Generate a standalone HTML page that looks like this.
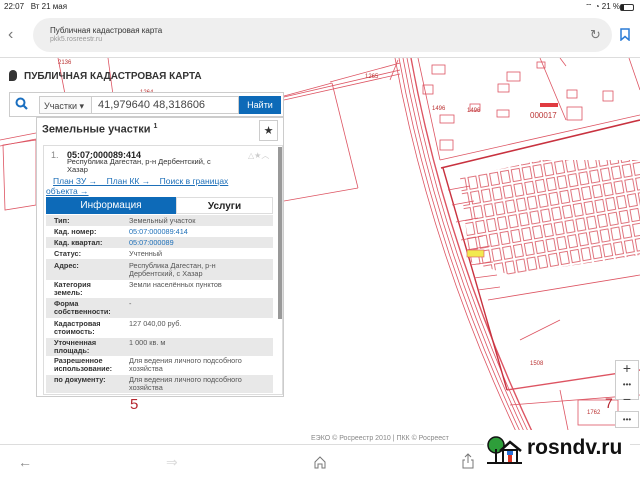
<!DOCTYPE html>
<html><head><meta charset="utf-8"><style>
*{margin:0;padding:0;box-sizing:border-box}
body{width:640px;height:480px;overflow:hidden;background:#fff;font-family:"Liberation Sans","DejaVu Sans",sans-serif;position:relative;color:#222}
.a{position:absolute;white-space:nowrap}
.row{position:absolute;left:46px;width:227px;font-size:7.3px;line-height:8px}
.row .l{position:absolute;left:8px;font-weight:bold;color:#333}
.row .v{position:absolute;left:83px;color:#555}
.g{background:#e8e8e8}
</style></head><body>
<!-- map -->
<svg class="a" style="left:0;top:56px" width="640" height="390" viewBox="0 56 640 390">
<defs>
<pattern id="p" width="11" height="15" patternUnits="userSpaceOnUse" patternTransform="rotate(-10)">
<rect x="1" y="1" width="8" height="12" fill="none" stroke="#d9535f" stroke-width="0.8"/>
</pattern>
<clipPath id="c"><polygon points="460,178 640,138 640,255 510,275 470,262"/></clipPath>
</defs>
<g fill="none" stroke="#dd5462" stroke-width="0.8">
<line x1="58" y1="58" x2="70" y2="120"/>
<line x1="108" y1="58" x2="113" y2="95"/>
<line x1="0" y1="140" x2="36" y2="133"/>
<line x1="0" y1="146" x2="36" y2="139"/>
<line x1="284" y1="97" x2="400" y2="70"/>
<line x1="284" y1="100" x2="400" y2="74"/>
<line x1="284" y1="96" x2="332" y2="83"/>
<line x1="332" y1="83" x2="358" y2="188"/>
<line x1="358" y1="188" x2="284" y2="201"/>
<polygon points="3,145 36,140 36,205 5,210"/>
<polyline points="330,82 400,63"/>
<line x1="390" y1="80" x2="398" y2="60"/>
<path d="M395 58 Q430 250 520 440"/>
<path d="M399 58 Q434 250 524 440"/>
<path d="M403 58 Q438 250 528 440"/>
<path d="M407 58 Q442 250 532 440"/>
<path d="M411 58 Q446 250 536 440" stroke-width="1.4"/>
<line x1="418" y1="58" x2="440" y2="160"/>
<line x1="440" y1="160" x2="640" y2="115"/>
<line x1="540" y1="58" x2="566" y2="120"/>
<line x1="560" y1="58" x2="566" y2="66"/>
<line x1="629" y1="58" x2="640" y2="90"/>
<line x1="507" y1="390" x2="640" y2="370" stroke-width="1.4"/>
<line x1="520" y1="340" x2="560" y2="320"/>
<line x1="510" y1="405" x2="640" y2="395"/>
<line x1="560" y1="390" x2="570" y2="440"/>
<rect x="537" y="62" width="8" height="6"/><rect x="432" y="65" width="13" height="9"/><rect x="507" y="72" width="13" height="9"/>
<rect x="423" y="85" width="10" height="9"/><rect x="498" y="84" width="11" height="8"/><rect x="567" y="90" width="10" height="8"/><rect x="603" y="91" width="10" height="10"/>
<rect x="497" y="110" width="12" height="7"/><rect x="567" y="107" width="15" height="13"/><rect x="470" y="104" width="10" height="7"/>
<rect x="440" y="115" width="14" height="8"/><rect x="440" y="140" width="13" height="10"/>
<rect x="578" y="400" width="40" height="25"/>
</g>
<polyline points="441,168 640,120" fill="none" stroke="#c8323f" stroke-width="1.6"/>
<polyline points="443,168 507,390" fill="none" stroke="#c8323f" stroke-width="1.4"/>
<rect x="460" y="160" width="180" height="120" fill="url(#p)" clip-path="url(#c)"/>
<g fill="none" stroke="#dd5462" stroke-width="0.8">
<line x1="448" y1="190" x2="470" y2="186"/><line x1="452" y1="205" x2="474" y2="201"/>
<line x1="456" y1="222" x2="478" y2="218"/><line x1="461" y1="240" x2="483" y2="236"/>
<line x1="466" y1="250" x2="490" y2="246"/><line x1="470" y1="265" x2="493" y2="262"/>
<line x1="474" y1="278" x2="497" y2="275"/><line x1="478" y1="290" x2="500" y2="287"/>
<line x1="488" y1="300" x2="640" y2="275"/>
</g>
<rect x="467" y="250" width="17" height="7" fill="#f2ea50" stroke="#d9535f" stroke-width="0.6"/>
<rect x="540" y="103" width="18" height="4" fill="#e03a40"/>
<g font-size="6" fill="#b33" font-family="Liberation Sans">
<text x="58" y="64">2136</text><text x="140" y="94">1264</text><text x="365" y="78">1265</text>
<text x="432" y="110">1496</text><text x="467" y="112">1496</text>
<text x="530" y="118" font-size="8">000017</text><text x="530" y="365">1508</text><text x="587" y="414">1762</text>
</g>
<text x="130" y="409" font-size="15" fill="#b5262f" font-family="Liberation Sans">5</text>
<text x="605" y="408" font-size="14" fill="#b5262f" font-family="Liberation Sans">7</text>
</svg>

<!-- status bar -->
<div class="a" style="left:4px;top:2px;font-size:8px">22:07 &nbsp; Вт 21 мая</div>
<div class="a" style="left:585px;top:2px;font-size:8px">⌔ ◔ 21 %</div>
<div class="a" style="left:620px;top:4px;width:14px;height:7px;border:1px solid #333;border-radius:2px"><div style="width:3px;height:5px;background:#222"></div></div>
<!-- url bar -->
<div class="a" style="left:8px;top:26px;font-size:16px;color:#777">‹</div>
<div class="a" style="left:33px;top:18px;width:579px;height:34px;background:#efefef;border-radius:17px"></div>
<div class="a" style="left:50px;top:26px;font-size:8px;color:#333">Публичная кадастровая карта</div>
<div class="a" style="left:50px;top:36px;font-size:7px;color:#999">pkk5.rosreestr.ru</div>
<div class="a" style="left:590px;top:27px;font-size:13px;color:#777">↻</div>
<svg class="a" style="left:620px;top:28px" width="10" height="13"><path d="M1 1H9V12L5 8.5L1 12Z" fill="none" stroke="#2a7bd6" stroke-width="1.5"/></svg>
<div class="a" style="left:0;top:57px;width:640px;height:1px;background:#ddd"></div>

<!-- header -->
<div class="a" style="left:9px;top:70px;width:8px;height:11px;background:#333;border-radius:4px 4px 4px 0"></div>
<div class="a" style="left:24px;top:71px;font-size:10px;font-weight:bold;color:#333">ПУБЛИЧНАЯ КАДАСТРОВАЯ КАРТА</div>
<!-- search -->
<div class="a" style="left:9px;top:92px;width:275px;height:25px;background:#fff;border:1px solid #ccc"></div>
<svg class="a" style="left:15px;top:97px" width="14" height="14"><circle cx="5.5" cy="5.5" r="4" fill="none" stroke="#1a6fc0" stroke-width="2"/><line x1="8.5" y1="8.5" x2="12" y2="12" stroke="#1a6fc0" stroke-width="2.2"/></svg>
<div class="a" style="left:39px;top:96px;width:53px;height:18px;border:1px solid #ccc;background:#fafafa;font-size:9px;color:#444;padding:4px 0 0 4px">Участки ▾</div>
<div class="a" style="left:91px;top:96px;width:148px;height:18px;border:1px solid #ccc;font-size:11px;color:#444;padding:2px 0 0 6px">41,979640 48,318606</div>
<div class="a" style="left:239px;top:96px;width:42px;height:18px;background:#0d6ab8;color:#fff;font-size:9px;text-align:center;padding-top:4px">Найти</div>
<!-- panel -->
<div class="a" style="left:36px;top:117px;width:248px;height:280px;background:#fff;border:1px solid #ccc"></div>
<div class="a" style="left:42px;top:123px;font-size:11px;font-weight:bold;color:#333">Земельные участки <sup style="font-size:7px">1</sup></div>
<div class="a" style="left:259px;top:120px;width:19px;height:21px;border:1px solid #ccc;text-align:center;font-size:11px;padding-top:3px;color:#333">★</div>
<div class="a" style="left:43px;top:145px;width:240px;height:250px;border:1px solid #ddd"></div>
<div class="a" style="left:278px;top:147px;width:4px;height:172px;background:#999"></div>
<div class="a" style="left:51px;top:150px;font-size:9px;color:#888">1.</div>
<div class="a" style="left:67px;top:150px;font-size:9px;font-weight:bold">05:07:000089:414</div>
<div class="a" style="left:248px;top:150px;font-size:8px;color:#ccc">△★︿</div>
<div class="a" style="left:67px;top:158px;font-size:7.5px;color:#333;line-height:8px">Республика Дагестан, р-н Дербентский, с<br>Хазар</div>
<div class="a" style="left:53px;top:177px;font-size:8.5px;color:#1d6fb8;text-decoration:underline;line-height:9px">План ЗУ → &nbsp;&nbsp; План КК → &nbsp;&nbsp; Поиск в границах</div>
<div class="a" style="left:46px;top:186px;font-size:8.5px;color:#1d6fb8;text-decoration:underline">объекта →</div>
<div class="a" style="left:46px;top:197px;width:130px;height:17px;background:#0d6ab8;color:#fff;font-size:10px;text-align:center;padding-top:3px">Информация</div>
<div class="a" style="left:176px;top:197px;width:97px;height:17px;background:#fff;border:1px solid #ddd;color:#222;font-size:10px;text-align:center;padding-top:3px;font-weight:bold">Услуги</div>

<div class="row g" style="top:215px;height:11px"><span class="l" style="top:2px">Тип:</span><span class="v" style="top:2px">Земельный участок</span></div>
<div class="row" style="top:226px;height:11px"><span class="l" style="top:2px">Кад. номер:</span><span class="v" style="top:2px;color:#1d6fb8">05:07:000089:414</span></div>
<div class="row g" style="top:237px;height:11px"><span class="l" style="top:2px">Кад. квартал:</span><span class="v" style="top:2px;color:#1d6fb8">05:07:000089</span></div>
<div class="row" style="top:248px;height:11px"><span class="l" style="top:2px">Статус:</span><span class="v" style="top:2px">Учтенный</span></div>
<div class="row g" style="top:259px;height:21px"><span class="l" style="top:3px">Адрес:</span><span class="v" style="top:3px">Республика Дагестан, р-н<br>Дербентский, с Хазар</span></div>
<div class="row" style="top:280px;height:18px"><span class="l" style="top:1px">Категория<br>земель:</span><span class="v" style="top:1px">Земли населённых пунктов</span></div>
<div class="row g" style="top:298px;height:20px"><span class="l" style="top:2px">Форма<br>собственности:</span><span class="v" style="top:2px">-</span></div>
<div class="row" style="top:318px;height:20px"><span class="l" style="top:2px">Кадастровая<br>стоимость:</span><span class="v" style="top:2px">127 040,00 руб.</span></div>
<div class="row g" style="top:338px;height:18px"><span class="l" style="top:1px">Уточненная<br>площадь:</span><span class="v" style="top:1px">1 000 кв. м</span></div>
<div class="row" style="top:356px;height:19px"><span class="l" style="top:1px">Разрешенное<br>использование:</span><span class="v" style="top:1px">Для ведения личного подсобного<br>хозяйства</span></div>
<div class="row g" style="top:375px;height:18px"><span class="l" style="top:1px">по документу:</span><span class="v" style="top:1px">Для ведения личного подсобного<br>хозяйства</span></div>

<!-- zoom ctrls -->
<div class="a" style="left:615px;top:360px;width:24px;height:40px;background:#fff;border:1px solid #ccc;text-align:center;font-size:14px;color:#444;line-height:14px">+<br><span style="font-size:8px">•••</span><br>−</div>
<div class="a" style="left:615px;top:411px;width:24px;height:17px;background:#fff;border:1px solid #ccc;text-align:center;font-size:8px;color:#444;padding-top:3px">•••</div>
<div class="a" style="left:311px;top:435px;font-size:7px;color:#888">ЕЭКО © Росреестр 2010 | ПКК © Росреест</div>
<!-- bottom bar -->
<div class="a" style="left:0;top:444px;width:640px;height:36px;background:#fff;border-top:1px solid #ddd"></div>
<div class="a" style="left:18px;top:454px;font-size:14px;color:#888">←</div>
<div class="a" style="left:166px;top:454px;font-size:14px;color:#ddd">⇒</div>
<svg class="a" style="left:313px;top:455px" width="14" height="14"><path d="M2 7L7 2L12 7V13H9V9H5V13H2Z" fill="none" stroke="#777" stroke-width="1"/></svg>
<svg class="a" style="left:462px;top:453px" width="12" height="16"><path d="M6 1V10M3 4L6 1L9 4M3 7H1V15H11V7H9" fill="none" stroke="#777" stroke-width="1"/></svg>
<!-- logo -->
<div class="a" style="left:484px;top:430px;width:146px;height:50px;background:#fff"></div>
<svg class="a" style="left:484px;top:435px" width="40" height="30">
<circle cx="12" cy="10" r="8" fill="#2e9e3a" stroke="#111" stroke-width="1.5"/>
<line x1="12" y1="14" x2="12" y2="28" stroke="#111" stroke-width="2"/>
<path d="M16 16L26 7L37 16" fill="none" stroke="#111" stroke-width="2.5"/>
<rect x="19" y="15" width="14" height="13" fill="#fff" stroke="#111" stroke-width="2"/>
<rect x="24" y="20" width="4" height="8" fill="#d32"/><rect x="23" y="16" width="6" height="4" fill="#2a6fd6"/>
<line x1="3" y1="28" x2="38" y2="28" stroke="#111" stroke-width="2"/>
</svg>
<div class="a" style="left:527px;top:436px;font-size:21px;font-weight:bold;color:#111">rosndv.ru</div>
</body></html>
